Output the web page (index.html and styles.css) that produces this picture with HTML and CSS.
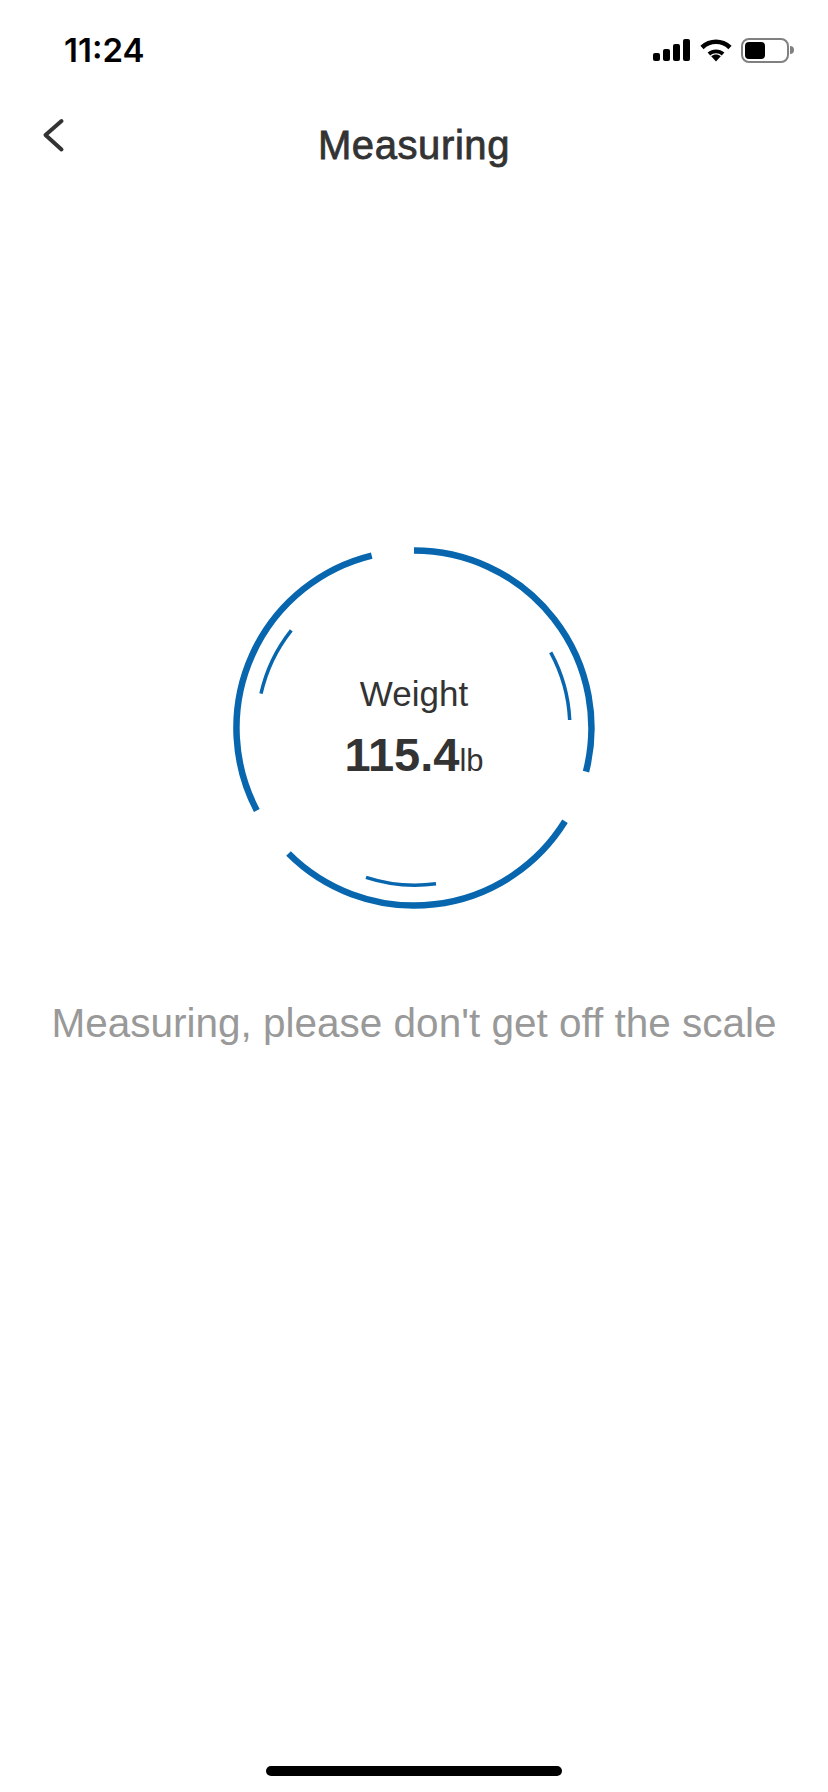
FILE: index.html
```html
<!DOCTYPE html>
<html lang="en">
<head>
    <meta charset="UTF-8">
    <meta name="viewport" content="width=device-width, initial-scale=1.0">
    <title>Measuring</title>
    <link rel="stylesheet" href="styles.css">
</head>
<body>
    <div class="screen">
        <div class="status-bar">
            <span class="status-time">11:24</span>
            <div class="status-icons">
                <svg class="icon-signal" width="37" height="24" viewBox="0 0 37 24">
                    <rect x="0" y="15" width="7" height="8" rx="2"/>
                    <rect x="10" y="11" width="7" height="12" rx="2"/>
                    <rect x="20" y="6" width="7" height="17" rx="2"/>
                    <rect x="30" y="1" width="7" height="22" rx="2"/>
                </svg>
                <svg class="icon-wifi" width="32" height="24" viewBox="0 0 32 24">
                    <path d="M16 23.5 L11.2 18.2 C14 15.8 18 15.8 20.8 18.2 Z"/>
                    <path d="M7.6 14.6 C12.4 10.4 19.6 10.4 24.4 14.6 L21.8 17.4 C18.4 14.6 13.6 14.6 10.2 17.4 Z"/>
                    <path d="M0.4 7.8 C9.2 -0.6 22.8 -0.6 31.6 7.8 L28.4 11.2 C21.4 4.4 10.6 4.4 3.6 11.2 Z"/>
                </svg>
                <div class="battery">
                    <div class="battery-body"><div class="battery-fill"></div></div>
                    <div class="battery-nub"></div>
                </div>
            </div>
        </div>

        <div class="nav-bar">
            <svg class="back-icon" width="24" height="36" viewBox="0 0 24 36">
                <path d="M20.5 4 L4.5 18 L20.5 32.5"/>
            </svg>
            <h1 class="nav-title">Measuring</h1>
        </div>

        <div class="content">
            <div class="gauge">
                <!-- ring segments, centre at 185,185 -->
                <svg class="gauge-ring" width="370" height="370" viewBox="0 0 370 370">
                    <g class="ring-outer">
                        <path d="M185 7.5 A177.5 177.5 0 0 1 357 228.6"/>
                        <path d="M336 278.3 A177.5 177.5 0 0 1 59.5 310.5"/>
                        <path d="M27.8 267.5 A177.5 177.5 0 0 1 142.7 12.6"/>
                    </g>
                    <g class="ring-inner">
                        <path d="M321.7 109.3 A156.5 156.5 0 0 1 340.7 177"/>
                        <path d="M207 340.7 A156.5 156.5 0 0 1 137 334.3"/>
                        <path d="M32 150.7 A156.5 156.5 0 0 1 62.3 87.3"/>
                    </g>
                </svg>
                <div class="gauge-text">
                    <div class="gauge-label">Weight</div>
                    <div class="gauge-value">115.4<span class="gauge-unit">lb</span></div>
                </div>
            </div>
            <p class="message">Measuring, please don't get off the scale</p>
        </div>

        <div class="home-bar"></div>
    </div>
</body>
</html>
```

FILE: styles.css
```css
body {
    margin: 0;
    background: #fff;
    font-family: 'Liberation Sans', Arial, sans-serif;
}
.screen {
    width: 828px;
    height: 1792px;
    display: flex;
    flex-direction: column;
    overflow: hidden;
}
.status-bar {
    height: 100px;
    display: flex;
    justify-content: space-between;
    align-items: center;
    padding: 0 34px 0 64px;
    box-sizing: border-box;
}
.status-time {
    font-family: 'Inter', sans-serif;
    font-size: 33px;
    font-weight: 600;
    color: #000;
}
.status-icons {
    display: flex;
    align-items: center;
    gap: 9.5px;
}
.status-icons svg {
    display: block;
    fill: #000;
}
.battery {
    display: flex;
    align-items: center;
    gap: 1px;
}
.battery-body {
    width: 48px;
    height: 25px;
    box-sizing: border-box;
    border: 2.5px solid #808080;
    border-radius: 8px;
    padding: 2px;
}
.battery-fill {
    width: 20px;
    height: 100%;
    background: #000;
    border-radius: 4px;
}
.battery-nub {
    width: 4px;
    height: 8px;
    background: #808080;
    border-radius: 0 4px 4px 0;
}
.nav-bar {
    height: 90px;
    position: relative;
    display: flex;
    justify-content: center;
    align-items: center;
}
.back-icon {
    position: absolute;
    left: 41px;
    top: 17px;
}
.back-icon path {
    fill: none;
    stroke: #333;
    stroke-width: 4;
    stroke-linecap: round;
    stroke-linejoin: round;
}
.nav-title {
    margin: 0;
    font-size: 40px;
    font-weight: 400;
    letter-spacing: 0.6px;
    color: #333;
    -webkit-text-stroke: 0.8px #333;
}
.content {
    padding-top: 353px;
    display: flex;
    flex-direction: column;
    align-items: center;
}
.gauge {
    display: grid;
    place-items: center;
}
.gauge-ring, .gauge-text {
    grid-area: 1 / 1;
}
.gauge-ring {
    display: block;
}
.ring-outer path, .ring-inner path {
    fill: none;
    stroke: #0766ae;
}
.ring-outer path {
    stroke-width: 6.5;
}
.ring-inner path {
    stroke-width: 3.5;
}
.gauge-text {
    padding-top: 4px;
    text-align: center;
    color: #333;
}
.gauge-label {
    font-size: 35px;
    line-height: 40px;
}
.gauge-value {
    margin-top: 16px;
    font-size: 47px;
    line-height: 50px;
    font-weight: 700;
}
.gauge-unit {
    font-size: 31px;
    font-weight: 400;
}
.message {
    margin: 87px 0 0;
    font-size: 40.5px;
    line-height: 46px;
    color: #999;
    white-space: nowrap;
}
.home-bar {
    width: 296px;
    height: 10px;
    margin: auto auto 16px;
    background: #000;
    border-radius: 5px;
}
```
